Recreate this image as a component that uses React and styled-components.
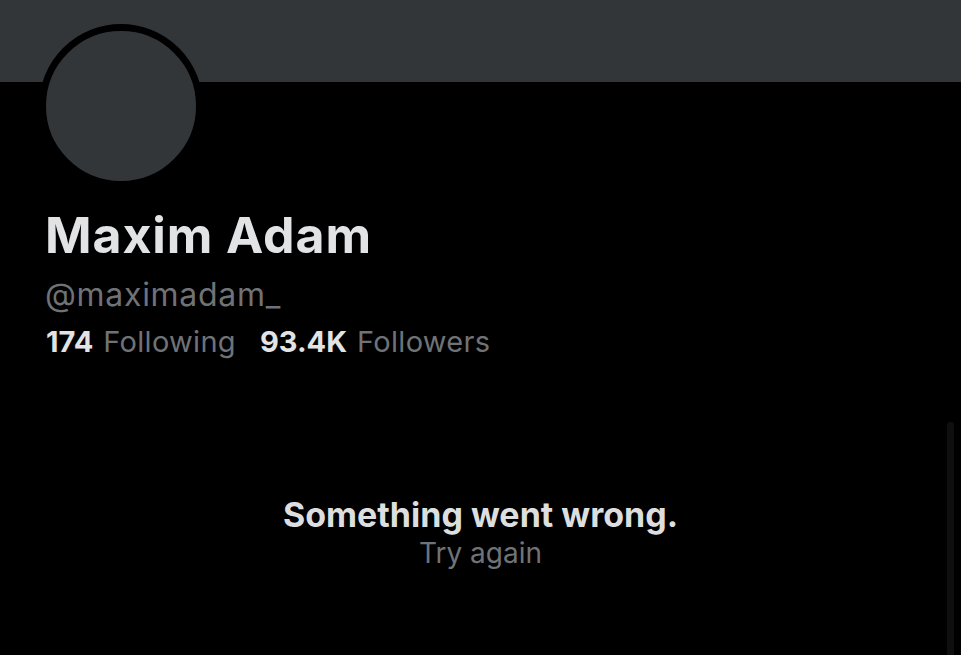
import React from 'react'
import styled, { createGlobalStyle } from 'styled-components'

const GlobalStyle = createGlobalStyle`
   html, body {
      margin: 0;
      padding: 0;
      background: #000;
      overflow: hidden;
   }
   body {
      font-family: Inter, "Noto Sans", "Liberation Sans", sans-serif;
   }
`

const Page = styled.main`
   position: relative;
   width: 961px;
   height: 655px;
   background: #000;
   overflow: hidden;
`

const Banner = styled.div`
   height: 82px;
   background-color: #333639;
`

const Profile = styled.section`
   padding-left: 39px;
   display: flex;
   flex-direction: column;
   align-items: flex-start;
`

const Avatar = styled.div`
   width: 150px;
   height: 150px;
   margin-top: -58px;
   border-radius: 50%;
   border: 7px solid #000;
   background-color: #333639;
`

const Name = styled.h1`
   margin: 17px 0 0 6px;
   font-size: 50px;
   line-height: 60px;
   font-weight: 700;
   color: #e2e3e4;
   letter-spacing: 0.9px;
`

const Handle = styled.div`
   margin: 11px 0 0 6px;
   font-size: 32px;
   line-height: 38px;
   letter-spacing: 0.7px;
   color: #6f7377;
`

const Stats = styled.div`
   display: flex;
   gap: 24px;
   margin: 10px 0 0 7px;
   font-size: 29px;
   line-height: 36px;
`

const Stat = styled.span`
   color: #6f7377;
   letter-spacing: 0.3px;

   b {
      color: #e2e3e4;
      font-weight: 700;
      margin-right: 10px;
      letter-spacing: 0;
   }
`

const ErrorBox = styled.div`
   margin-top: 135px;
   display: flex;
   flex-direction: column;
   align-items: center;
   text-align: center;
`

const ErrorTitle = styled.div`
   font-size: 34px;
   line-height: 40px;
   font-weight: 700;
   color: #dcdedf;
`

const Retry = styled.div`
   font-size: 28px;
   line-height: 36px;
   color: #6f7377;
`

const ScrollThumb = styled.div`
   position: absolute;
   right: 7px;
   top: 422px;
   bottom: 0;
   width: 7px;
   border-radius: 3px 3px 0 0;
   background: #0f0f0f;
`

function App() {
   return (
      <Page>
         <GlobalStyle />
         <Banner />
         <Profile>
            <Avatar />
            <Name>Maxim Adam</Name>
            <Handle>@maximadam_</Handle>
            <Stats>
               <Stat><b>174</b>Following</Stat>
               <Stat><b>93.4K</b>Followers</Stat>
            </Stats>
         </Profile>
         <ErrorBox>
            <ErrorTitle>Something went wrong.</ErrorTitle>
            <Retry>Try again</Retry>
         </ErrorBox>
         <ScrollThumb />
      </Page>
   )
}

export default App
